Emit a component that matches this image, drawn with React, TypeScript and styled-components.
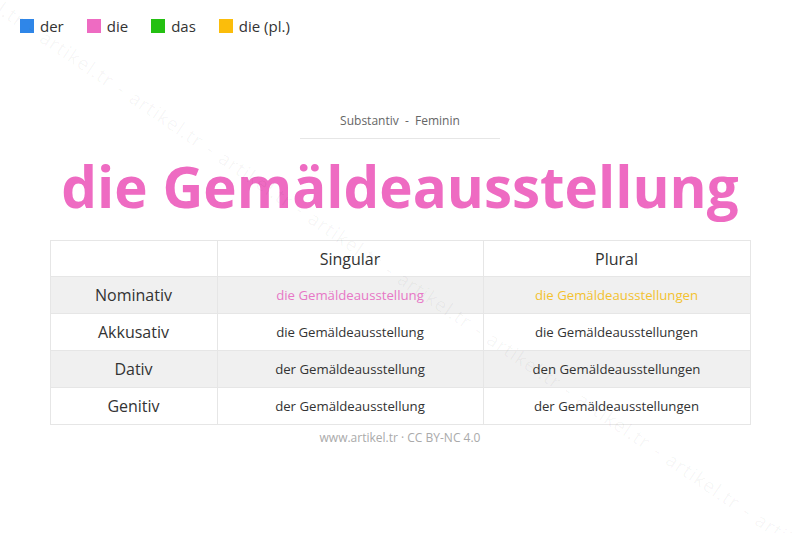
import React from 'react';
import styled, { createGlobalStyle } from 'styled-components';

const GlobalStyle = createGlobalStyle`
  html, body {
    margin: 0;
    padding: 0;
    background: #ffffff;
    font-family: 'Open Sans', 'Noto Sans', sans-serif;
    color: #333;
  }
`;

const Page = styled.div`
  position: relative;
  width: 800px;
  height: 533px;
  overflow: hidden;
  background: #fff;
`;

const Watermark = styled.div`
  position: absolute;
  left: -40px;
  top: -36px;
  transform-origin: 0 0;
  transform: rotate(34deg);
  white-space: nowrap;
  font-size: 19px;
  letter-spacing: 1px;
  word-spacing: 2px;
  color: rgba(0, 0, 0, 0.045);
  pointer-events: none;
  z-index: 2;
`;

const Legend = styled.div`
  display: flex;
  gap: 23px;
  padding: 16px 20px 0;
`;

const LegendItem = styled.div`
  display: flex;
  align-items: center;
  gap: 6px;
  font-size: 15px;
  color: #333;
  line-height: 20px;
`;

const Swatch = styled.span<{ $color: string }>`
  width: 14px;
  height: 14px;
  background: ${({ $color }) => $color};
`;

const Header = styled.div`
  display: flex;
  flex-direction: column;
  align-items: center;
  margin-top: 76px;
`;

const Kind = styled.div`
  width: 200px;
  text-align: center;
  font-size: 12px;
  color: #666;
  padding-bottom: 9px;
  border-bottom: 1px solid #e6e6e6;
`;

const Word = styled.h1`
  margin: 8px 0 0;
  font-size: 56.5px;
  font-weight: 700;
  line-height: 80px;
  color: #ee6bc2;
`;

const Table = styled.table`
  width: 701px;
  margin: 13px auto 0;
  border-collapse: collapse;
  border: 1px solid #e6e6e6;
  table-layout: fixed;
`;

const Row = styled.tr<{ $shade?: boolean }>`
  background: ${({ $shade }) => ($shade ? '#f0f0f0' : '#fff')};
`;

const HeadCell = styled.th<{ $width?: number }>`
  width: ${({ $width }) => ($width ? `${$width}px` : 'auto')};
  height: 35px;
  padding: 0;
  font-size: 16px;
  font-weight: 400;
  color: #333;
  border-left: 1px solid #e6e6e6;
`;

const CaseCell = styled.td`
  height: 36px;
  padding: 0;
  text-align: center;
  font-size: 16px;
  color: #333;
  border-top: 1px solid #e6e6e6;
`;

const FormCell = styled.td<{ $color?: string }>`
  height: 36px;
  padding: 0;
  text-align: center;
  font-size: 13.2px;
  color: ${({ $color }) => $color || '#333'};
  border-top: 1px solid #e6e6e6;
  border-left: 1px solid #e6e6e6;
`;

const Footer = styled.div`
  margin-top: 4px;
  text-align: center;
  font-size: 12px;
  color: #aaa;
`;

const legend = [
  { label: 'der', color: '#2f86e8' },
  { label: 'die', color: '#ee6bc2' },
  { label: 'das', color: '#24c012' },
  { label: 'die (pl.)', color: '#fbbd0b' },
];

const rows = [
  { name: 'Nominativ', sg: 'die Gemäldeausstellung', pl: 'die Gemäldeausstellungen', sgColor: '#e777c6', plColor: '#f3c22f' },
  { name: 'Akkusativ', sg: 'die Gemäldeausstellung', pl: 'die Gemäldeausstellungen' },
  { name: 'Dativ', sg: 'der Gemäldeausstellung', pl: 'den Gemäldeausstellungen' },
  { name: 'Genitiv', sg: 'der Gemäldeausstellung', pl: 'der Gemäldeausstellungen' },
];

export default function App() {
  return (
    <Page>
      <GlobalStyle />
      <Watermark>{Array(12).fill('artikel.tr').join(' - ')}</Watermark>

      <Legend>
        {legend.map(item => (
          <LegendItem key={item.label}>
            <Swatch $color={item.color} />
            {item.label}
          </LegendItem>
        ))}
      </Legend>

      <Header>
        <Kind>Substantiv&nbsp; - &nbsp;Feminin</Kind>
        <Word>die Gemäldeausstellung</Word>
      </Header>

      <Table>
        <thead>
          <Row>
            <HeadCell $width={166} />
            <HeadCell $width={265}>Singular</HeadCell>
            <HeadCell>Plural</HeadCell>
          </Row>
        </thead>
        <tbody>
          {rows.map((r, i) => (
            <Row key={r.name} $shade={i % 2 === 0}>
              <CaseCell>{r.name}</CaseCell>
              <FormCell $color={r.sgColor}>{r.sg}</FormCell>
              <FormCell $color={r.plColor}>{r.pl}</FormCell>
            </Row>
          ))}
        </tbody>
      </Table>

      <Footer>www.artikel.tr · CC BY-NC 4.0</Footer>
    </Page>
  );
}
